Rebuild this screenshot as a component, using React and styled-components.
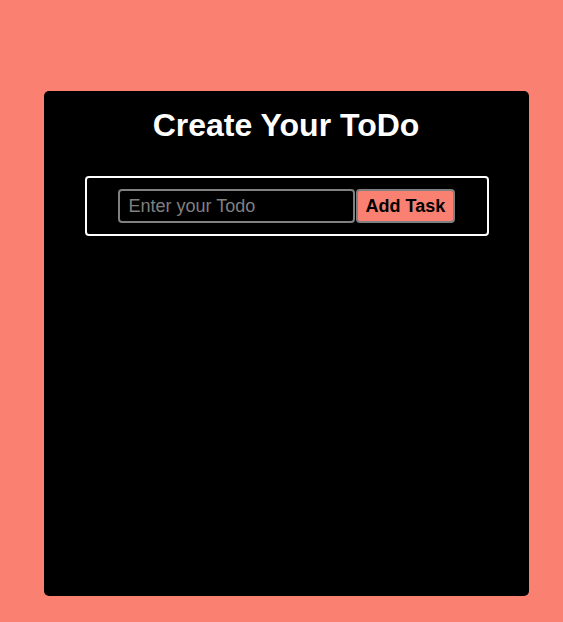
import React, { useState } from "react";
import styled, { createGlobalStyle } from "styled-components";

const GlobalStyle = createGlobalStyle`
  html, body {
    margin: 0;
    padding: 0;
    background-color: #fa8072;
    font-family: "Liberation Sans", Arial, sans-serif;
  }
`;

const Page = styled.div`
  min-height: 622px;
  box-sizing: border-box;
  padding: 91px 34px 26px 44px;
  display: flex;
`;

const Card = styled.div`
  flex: 1;
  height: 505px;
  background-color: #000;
  border-radius: 5px;
  display: flex;
  flex-direction: column;
  align-items: center;
  padding-top: 16px;
  box-sizing: border-box;
`;

const Title = styled.h1`
  margin: 0 0 32px;
  padding-right: 1px;
  color: #fff;
  font-size: 32px;
  font-weight: bold;
  line-height: 37px;
`;

const Form = styled.form`
  width: 404px;
  height: 60px;
  box-sizing: border-box;
  border: 2px solid #fff;
  border-radius: 4px;
  display: flex;
  align-items: center;
  padding-left: 31px;
`;

const Input = styled.input`
  width: 237px;
  height: 34px;
  box-sizing: border-box;
  background-color: #000;
  color: #fff;
  border: 2px solid #808080;
  border-radius: 4px;
  padding: 0 9px;
  font-family: "Liberation Sans", Arial, sans-serif;
  font-size: 18px;
  outline: none;

  &::placeholder {
    color: #808080;
  }
`;

const Button = styled.button`
  height: 34px;
  box-sizing: border-box;
  margin-left: 1px;
  background-color: #fa8072;
  color: #000;
  border: 2px solid #808080;
  border-radius: 4px;
  padding: 0 8px;
  font-family: "Liberation Sans", Arial, sans-serif;
  font-size: 18px;
  font-weight: bold;
  cursor: pointer;
`;

export default function App() {
  const [todo, setTodo] = useState("");
  const [todos, setTodos] = useState([]);

  const handleSubmit = e => {
    e.preventDefault();
    if (!todo.trim()) return;
    setTodos([...todos, todo]);
    setTodo("");
  };

  return (
    <>
      <GlobalStyle />
      <Page>
        <Card>
          <Title>Create Your ToDo</Title>
          <Form onSubmit={handleSubmit}>
            <Input
              placeholder="Enter your Todo"
              value={todo}
              onChange={e => setTodo(e.target.value)}
            />
            <Button type="submit">Add Task</Button>
          </Form>
        </Card>
      </Page>
    </>
  );
}
